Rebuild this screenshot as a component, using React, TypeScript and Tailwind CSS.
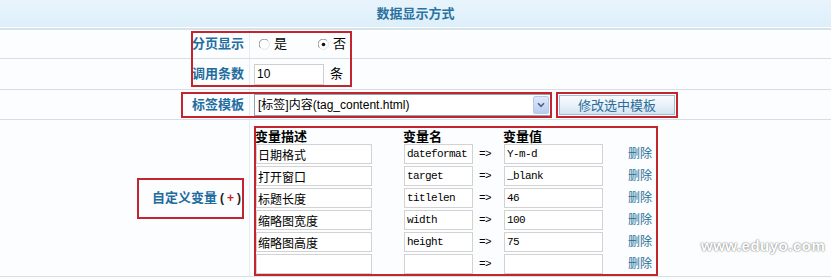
import type { ReactNode } from 'react'

const vars = [
	{ desc: '日期格式', name: 'dateformat', value: 'Y-m-d' },
	{ desc: '打开窗口', name: 'target', value: '_blank' },
	{ desc: '标题长度', name: 'titlelen', value: '46' },
	{ desc: '缩略图宽度', name: 'width', value: '100' },
	{ desc: '缩略图高度', name: 'height', value: '75' },
	{ desc: '', name: '', value: '' },
]

const Radio = ({ checked }: { checked?: boolean }) => (
	<svg width="11" height="11" viewBox="0 0 11 11">
		<circle cx="5.5" cy="5.5" r="5" fill="#fff" />
		<path d="M1.6 8.9 A5 5 0 0 1 8.9 1.6" fill="none" stroke="#8a8a8a" strokeWidth="1" />
		<path d="M8.9 1.6 A5 5 0 0 1 1.6 8.9" fill="none" stroke="#e4e4e4" strokeWidth="1" />
		{checked && <circle cx="5.5" cy="5.5" r="1.8" fill="#111" />}
	</svg>
)

const Row = ({ h, label, children }: { h: string; label: ReactNode; children: ReactNode }) => (
	<div className={`flex border-b border-[#d8dfe3] ${h}`}>
		<div className="w-[249px] flex items-center justify-end pr-[5px] text-[13px] font-bold text-[#1f6c9f]">
			{label}
		</div>
		<div className="w-px bg-[#e6edf0]" />
		<div className="flex-1 flex items-center pl-[4px]">{children}</div>
	</div>
)

const Field = ({ value, w, mono }: { value: string; w: string; mono?: boolean }) => (
	<input
		readOnly
		value={value}
		className={`${w} h-[20px] border border-[#d2d2d2] bg-white px-[1px] text-black outline-none ${
			mono
				? "font-['Liberation_Mono',monospace] text-[11px] tracking-[-0.6px] pl-[2px]"
				: 'text-[12px]'
		}`}
	/>
)

export default function App() {
	return (
		<div className="relative w-[831px] h-[279px] overflow-hidden bg-[#fbfdfe] text-[12px] text-black font-['Liberation_Sans','Noto_Sans_CJK_SC',sans-serif]">
			<div className="h-[27px] flex items-center justify-center bg-gradient-to-b from-[#e8f4fc] to-[#ddeffa] text-[13px] font-bold text-[#2a72a0]">
				数据显示方式
			</div>
			<div className="h-px bg-white" />
			<div className="h-[2px] bg-[#d5e3ea]" />

			<Row h="h-[29px]" label="分页显示">
				<span className="ml-[5px] flex items-center">
					<Radio />
				</span>
				<span className="ml-[4px] text-[13px]">是</span>
				<span className="ml-[31px] flex items-center">
					<Radio checked />
				</span>
				<span className="ml-[4px] text-[13px]">否</span>
			</Row>

			<Row h="h-[31px]" label="调用条数">
				<input
					readOnly
					value="10"
					className="w-[70px] h-[21px] border border-[#cfcfcf] bg-white pl-[2px] text-[12px] outline-none"
				/>
				<span className="ml-[6px] text-[13px]">条</span>
			</Row>

			<Row h="h-[30px]" label="标签模板">
				<div className="w-[297px] h-[22px] flex items-center border border-[#8ea4b8] bg-white">
					<span className="flex-1 pl-[3px] text-[12px]">[标签]内容(tag_content.html)</span>
					<span className="mr-px w-[16px] h-[18px] flex items-center justify-center rounded-[2px] border border-[#b6c9e6] bg-gradient-to-b from-[#dfe9f9] to-[#b9cdf0]">
						<svg width="8" height="6" viewBox="0 0 8 6">
							<path d="M1 1.2 L4 4.4 L7 1.2" fill="none" stroke="#4d6185" strokeWidth="1.6" />
						</svg>
					</span>
				</div>
				<div className="ml-[5px] border-2 border-[#c2252e] p-px">
					<button className="w-[116px] h-[20px] border border-[#a9bccd] bg-gradient-to-b from-[#f8fbfd] via-[#e9f2f9] to-[#d3e4f1] text-[13px] text-[#2a6d9c]">
						修改选中模板
					</button>
				</div>
			</Row>

			<Row
				h="h-[157px]"
				label={
					<div className="w-[107px] h-[41px] flex items-center justify-end border-2 border-[#c2252e] pr-[1px] text-[13px]">
						自定义变量
						<span className="ml-[3px] text-[#222] text-[12px]">(</span>
						<span className="mx-[3px] text-[#d0202a] text-[12px]">+</span>
						<span className="text-[#222] text-[12px]">)</span>
					</div>
				}
			>
				<div className="self-start mt-[6px] w-[404px] border-2 border-[#c2252e]">
					<div className="h-[16px] flex items-center text-[13px] font-bold leading-none">
						<span className="w-[148px] -ml-px">变量描述</span>
						<span className="w-[100px]">变量名</span>
						<span>变量值</span>
					</div>
					<div className="flex flex-col gap-[2px]">
						{vars.map((v, i) => (
							<div key={i} className="h-[20px] flex items-center">
								<Field value={v.desc} w="w-[116px]" />
								<span className="ml-[32px]">
									<Field value={v.name} w="w-[69px]" mono />
								</span>
								<span className="ml-[6px] w-[25px] font-['Liberation_Mono',monospace] text-[11px] tracking-[-0.6px]">
									=&gt;
								</span>
								<Field value={v.value} w="w-[99px]" mono />
								<span className="ml-[25px] text-[12px] text-[#1f6f99]">删除</span>
							</div>
						))}
					</div>
				</div>
			</Row>

			{/* annotation boxes */}
			<div className="absolute left-[191px] top-[31px] w-[161px] h-[56px] border-2 border-[#c2252e]" />
			<div className="absolute left-[181px] top-[92px] w-[371px] h-[26px] border-2 border-[#c2252e]" />

			<div className="absolute left-[701px] top-[235px] text-[15px] font-bold tracking-[0.5px] text-white [text-shadow:0_0_2px_#777,0_0_1px_#999]">
				www.eduyo.com
			</div>
		</div>
	)
}
